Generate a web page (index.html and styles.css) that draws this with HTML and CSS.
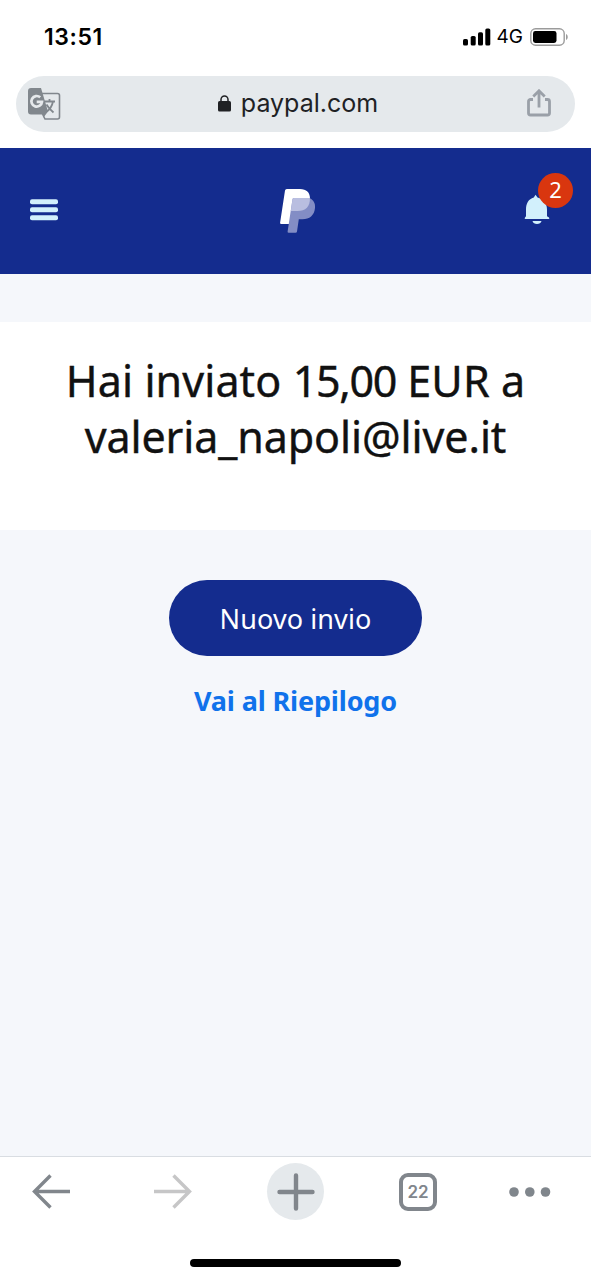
FILE: index.html
```html
<!DOCTYPE html>
<html lang="it">
<head>
<meta charset="utf-8">
<title>PayPal</title>
<link rel="stylesheet" href="styles.css">
</head>
<body>
<div class="screen">
  <div class="status">
    <span class="time">13:51</span>
    <div class="status-right">
      <svg class="signal" width="28" height="18" viewBox="0 0 28 18"><rect x="0" y="11" width="5" height="6.5" rx="1.6"/><rect x="7.7" y="8" width="5" height="9.5" rx="1.6"/><rect x="15" y="4.3" width="5" height="13.2" rx="1.6"/><rect x="22.3" y=".5" width="5" height="17" rx="1.6"/></svg>
      <span class="network">4G</span>
      <svg class="battery" width="38" height="18" viewBox="0 0 38 18"><rect x=".8" y=".8" width="33.4" height="16.4" rx="4.8" fill="none" stroke="#9b9b9b" stroke-width="1.4"/><rect x="3" y="3" width="23.5" height="12" rx="2.4"/><path d="M36 6c2.3.7 2.3 5.3 0 6z" fill="#9b9b9b"/></svg>
    </div>
  </div>
  <div class="address">
    <svg class="translate" width="34" height="34" viewBox="0 0 34 34">
      <path d="M14 6.500h15.500a2 2 0 0 1 2 2v21.500a2 2 0 0 1-2 2H17l-2.500-5" fill="none" stroke="#81878d" stroke-width="1.600"/>
      <path d="M3 1h10l7 23.500-4.500 6-.5-3H3a3 3 0 0 1-3-3V4a3 3 0 0 1 3-3z" fill="#81878d"/>
      <path d="M12.200 10.300A5.300 5.300 0 1 0 14 14.800H8.700" fill="none" stroke="#e6e9ec" stroke-width="2.700"/>
      <path d="M16.500 14.500H27M21.500 12v2.500M25 14.500c-1 5-3.500 8-6 10M18.500 17.500c2 3.500 4 5.500 7 8" fill="none" stroke="#81878d" stroke-width="1.800"/>
    </svg>
    <div class="site">
      <svg width="13" height="17" viewBox="0 0 13 17"><rect x="0" y="6" width="13" height="10.500" rx="1.600" fill="#202124"/><path d="M3 7V4.500a3.500 3.500 0 0 1 7 0V7" fill="none" stroke="#202124" stroke-width="1.500"/></svg>
      <span class="domain">paypal.com</span>
    </div>
    <svg class="share" width="24" height="30" viewBox="0 0 24 30" fill="none" stroke="#9aa0a8" stroke-width="2.800"><path d="M6 10.500H3.500a2 2 0 0 0-2 2V24a2 2 0 0 0 2 2h17a2 2 0 0 0 2-2V12.500a2 2 0 0 0-2-2H18M12 18.500V2M6.300 7.500 12 1.800l5.700 5.700"/></svg>
  </div>
  <header class="header">
    <svg class="menu" width="28" height="22" viewBox="0 0 28 22" fill="#d2f0fc"><rect width="28" height="5" y=".3" rx="2"/><rect width="28" height="5" y="8.300" rx="2"/><rect width="28" height="5" y="16.200" rx="2"/></svg>
    <svg class="logo" width="36" height="46" viewBox="0 0 36 46">
      <path d="M6.800 1H20c6.500 0 10 3.500 10 9.500 0 8-5 12.500-12.500 12.500h-6L9.500 36H1.200q-1.300 0-1.100-1.300L5 2.500Q5.200 1 6.800 1z" fill="#fff"/>
      <path d="M14 10h15.500c4 2 6 5 5.500 10-.8 7.500-5.500 11.300-12.500 11.300h-3.700L17 43.500q-.2 1.300-1.500 1.300H8.700q-1.300 0-1.100-1.300L12.500 11.200Q12.700 10 14 10z" fill="#838dc5"/>
      <path d="M14 10h15.800C30.500 18.500 25.500 23 17.500 23h-6.700l1.700-11.800Q12.700 10 14 10z" fill="#b9bee0"/>
    </svg>
    <div class="alerts">
      <svg width="26" height="32" viewBox="0 0 26 32" fill="#d2f0fc"><path d="M9.800 3.500 11.500.8l2 2.700c6 1.500 9.500 6 9.500 12v6.700l2 1.300q1 1.500-.5 1.500h-23Q0 25 1 23.500l1-1.300v-6.700c0-6 2.500-10.500 7.800-12zM8.500 27h9c-.5 4-8.500 4-9 0z"/></svg>
      <span class="badge">2</span>
    </div>
  </header>
  <main class="content">
    <section class="message"><h1><span class="headline">Hai inviato <span class="amount">15,00</span> EUR a</span><br>valeria_napoli@live.it</h1></section>
    <div class="actions">
      <a class="primary">Nuovo invio</a>
      <a class="link">Vai al Riepilogo</a>
    </div>
  </main>
  <footer class="toolbar">
    <div class="nav">
      <svg width="38" height="36" viewBox="0 0 38 36" fill="none" stroke="#81868c" stroke-width="3.400"><path d="M38 17.500H2.500M18.500 1.500 2.500 17.500l16 16"/></svg>
      <svg class="forward" width="38" height="36" viewBox="0 0 38 36" fill="none" stroke="#c6c6c7" stroke-width="3.400"><path d="M0 17.500h35.500M19.500 1.500l16 16-16 16"/></svg>
      <span class="add"><svg width="38" height="38" viewBox="0 0 38 38" stroke="#81868c" stroke-width="4.400" stroke-linecap="round"><path d="M2.500 19h33M19 2.500v33"/></svg></span>
      <span class="tabs">22</span>
      <svg class="more" width="42" height="10" viewBox="0 0 42 10" fill="#80868c"><circle cx="5" cy="5" r="4.800"/><circle cx="20.800" cy="5" r="4.800"/><circle cx="36.500" cy="5" r="4.800"/></svg>
    </div>
    <div class="home"></div>
  </footer>
</div>
</body>
</html>
```
FILE: styles.css
```css
* { box-sizing: border-box; }
body { margin: 0; background: #fff; font-family: Inter, "Liberation Sans", sans-serif; }
.screen { width: 591px; height: 1280px; display: flex; flex-direction: column; overflow: hidden; }
svg { display: block; flex: none; }
.status { height: 76px; padding: 24px 23px 0 44px; display: flex; justify-content: space-between; align-items: flex-start; }
.time { font-size: 23px; line-height: 26px; font-weight: 600; letter-spacing: .6px; }
.status-right { display: flex; align-items: center; padding-top: 3px; height: 22px; }
.network { font-size: 19px; line-height: 20px; margin: 0 7px 0 6px; }
.address { height: 56px; margin: 0 16px; padding: 0 24px 0 12px; border-radius: 28px; background: #e5e9ec; display: flex; align-items: center; justify-content: space-between; }
.site { display: flex; align-items: center; gap: 10px; margin: 0 0 2px 7px; color: #202124; }
.domain { font-size: 25px; line-height: 30px; }
.header { height: 126px; margin-top: 16px; padding: 0 41px 2px 30px; background: #142c8e; display: flex; align-items: center; justify-content: space-between; }
.logo { margin: 2px 0 0 13px; }
.alerts { position: relative; }
.badge { position: absolute; left: 14px; top: -21px; width: 35px; height: 35px; border-radius: 50%; background: #d9360f; color: #fff; font: 22px/33px "Noto Sans", sans-serif; text-align: center; }
.content { height: 882px; padding-top: 48px; background: #f5f7fb; }
.message { height: 208px; padding-top: 31px; background: #fff; text-align: center; }
h1 { margin: 0; color: #111; font: 400 43px/56px "Noto Sans", sans-serif; letter-spacing: -.1px; -webkit-text-stroke: .4px #111; white-space: nowrap; }
.headline { letter-spacing: .1px; }
.amount { letter-spacing: -1.3px; }
.actions { padding-top: 50px; display: flex; flex-direction: column; align-items: center; }
.primary { width: 253px; height: 76px; border-radius: 38px; background: #142c8e; color: #fff; font: 27px/78px "Noto Sans", sans-serif; letter-spacing: .1px; text-align: center; }
.link { margin-top: 27px; color: #1072eb; font: 700 27px/36px "Noto Sans", sans-serif; letter-spacing: -.15px; white-space: nowrap; }
.toolbar { height: 124px; border-top: 1px solid #d9dde2; background: #fff; display: flex; flex-direction: column; align-items: center; }
.nav { width: 100%; height: 69px; padding: 0 40px 0 32px; display: flex; align-items: center; gap: 75px; }
.forward { margin-left: 9px; }
.more { margin-left: -3px; }
.add { flex: none; width: 57px; height: 57px; border-radius: 50%; background: #e5e9ec; display: grid; place-items: center; }
.tabs { flex: none; width: 38px; height: 38px; border: 4px solid #81868c; border-radius: 9px; color: #81868c; font-size: 17px; font-weight: 600; line-height: 30px; text-align: center; }
.home { width: 211px; height: 8px; margin-top: 33px; border-radius: 4px; background: #000; }
```
